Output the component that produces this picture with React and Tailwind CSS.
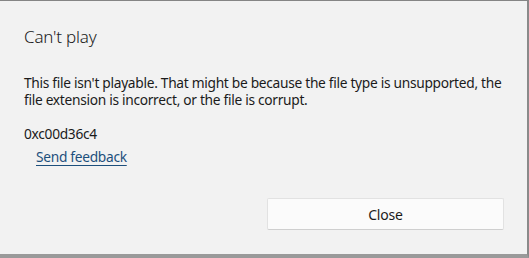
import React from 'react';

const font = { fontFamily: '"Noto Sans", "Open Sans", sans-serif' };

const App = () => {
  return (
    <div
      className="w-[529px] h-[258px] box-border bg-[#f2f2f2] border-t border-r-2 border-b-4 border-t-[#858585] border-r-[#8a8a8a] border-b-[#9a9a9a] flex flex-col text-[#1b1b1b]"
      style={font}
    >
      <div className="px-6 pt-[24px] flex-1">
        {/* title */}
        <h1 className="text-[17px] leading-[24px] font-light tracking-[-0.2px]">Can't play</h1>

        {/* message */}
        <p className="mt-[25px] w-[484px] text-[13.75px] leading-[17px] tracking-[-0.3px]">
          This file isn't playable. That might be because the file type is unsupported, the file extension is incorrect, or the file is corrupt.
        </p>

        <p className="mt-[17px] text-[13.75px] leading-[17px] tracking-[-0.3px]">0xc00d36c4</p>

        <a
          href="#"
          className="inline-block mt-[6px] ml-3 text-[13.75px] leading-[17px] tracking-[-0.3px] text-[#1d4f7c] underline underline-offset-[3px]"
        >
          Send feedback
        </a>
      </div>

      {/* footer buttons */}
      <div className="grid grid-cols-2 gap-[6px] pl-6 pr-[23px] pb-[24px]">
        <div />
        <button className="h-[32px] bg-[#fbfbfb] border border-[#e2e2e2] border-b-[#cfcfcf] rounded-[2px] text-[14px] tracking-[-0.2px] text-[#1b1b1b]">
          Close
        </button>
      </div>
    </div>
  );
};

export default App;
